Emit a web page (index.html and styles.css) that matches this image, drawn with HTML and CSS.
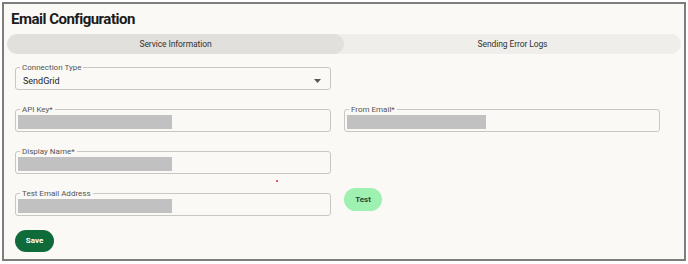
FILE: index.html
```html
<!DOCTYPE html>
<html lang="en">
<head>
  <meta charset="UTF-8">
  <title>Email Configuration</title>
  <link rel="stylesheet" href="styles.css">
</head>
<body>

  <div class="frame">
    <h2>Email Configuration</h2>

    <div class="tabs">
      <div class="tab active">Service Information</div>
      <div class="tab">Sending Error Logs</div>
    </div>

    <form class="config-form">
      <fieldset class="field">
        <legend>Connection Type</legend>
        <div class="select-value">
          <span>SendGrid</span>
          <svg class="caret" width="7" height="4" viewBox="0 0 7 4"><path d="M0 0h7L3.5 4z" fill="#555"/></svg>
        </div>
      </fieldset>
      <div></div>

      <fieldset class="field">
        <legend>API Key*</legend>
        <div class="redacted"></div>
      </fieldset>
      <fieldset class="field">
        <legend>From Email*</legend>
        <div class="redacted short"></div>
      </fieldset>

      <fieldset class="field">
        <legend>Display Name*</legend>
        <div class="redacted"></div>
      </fieldset>
      <div></div>

      <fieldset class="field">
        <legend>Test Email Address</legend>
        <div class="redacted"></div>
      </fieldset>
      <div class="test-cell">
        <button type="button" class="btn btn-test">Test</button>
      </div>

      <div class="actions">
        <button type="button" class="btn btn-save">Save</button>
      </div>

      <span class="dot"></span>
    </form>
  </div>

</body>
</html>
```

FILE: styles.css
```css
html, body {
  margin: 0;
  background: #ffffff;
}
body {
  font-family: Roboto, 'Liberation Sans', sans-serif;
  color: #222;
}
.frame {
  box-sizing: border-box;
  margin: 2px 2px 0 2px;
  height: 259px;
  border: 2px solid #7d7d7d;
  background: #faf9f6;
  padding: 0 3px;
}
h2 {
  margin: 6px 0 0 4px;
  font-size: 15px;
  line-height: 19px;
  font-weight: 700;
  letter-spacing: -0.5px;
  color: #1b1b1b;
}
.tabs {
  display: flex;
  margin-top: 5px;
  height: 20px;
  background: #efeeea;
  border-radius: 10px;
}
.tab {
  flex: 1;
  display: flex;
  align-items: center;
  justify-content: center;
  font-size: 8.5px;
  letter-spacing: -0.1px;
  color: #333;
  border-radius: 10px;
}
.tab.active {
  background: #e2e0dc;
}
.config-form {
  position: relative;
  display: grid;
  grid-template-columns: 316px 316px;
  column-gap: 13px;
  row-gap: 15px;
  margin-top: 9px;
  padding-left: 8px;
}
.field {
  margin: 0;
  padding: 1px 2px 1px 2px;
  border: 1px solid #c9c7c3;
  border-radius: 3px;
  min-width: 0;
}
.field legend {
  margin-left: 2px;
  padding: 0 2px;
  font-size: 8px;
  line-height: 9px;
  color: #555;
}
.redacted {
  width: 154px;
  height: 14px;
  margin-bottom: 1px;
  background: #c1c1c1;
}
.redacted.short {
  width: 139px;
}
.select-value {
  display: flex;
  align-items: center;
  justify-content: space-between;
  height: 15px;
  padding: 0 7px 0 5px;
  font-size: 9px;
  color: #222;
}
.caret {
  margin-top: 1px;
}
.test-cell {
  display: flex;
  align-items: flex-start;
}
.btn {
  border: none;
  font-family: Roboto, 'Liberation Sans', sans-serif;
  font-size: 8px;
  font-weight: 700;
  padding: 0;
}
.btn-test {
  margin-top: -1px;
  width: 38px;
  height: 23px;
  border-radius: 12px;
  background: #9ef1b1;
  color: #2b4d35;
}
.actions {
  grid-column: 1 / -1;
  margin-top: -3px;
}
.btn-save {
  width: 39px;
  height: 22px;
  border-radius: 11px;
  background: #0f6b3a;
  color: #ffffff;
}
.dot {
  position: absolute;
  left: 269px;
  top: 117px;
  width: 2px;
  height: 2px;
  border-radius: 50%;
  background: #e02020;
}
```
